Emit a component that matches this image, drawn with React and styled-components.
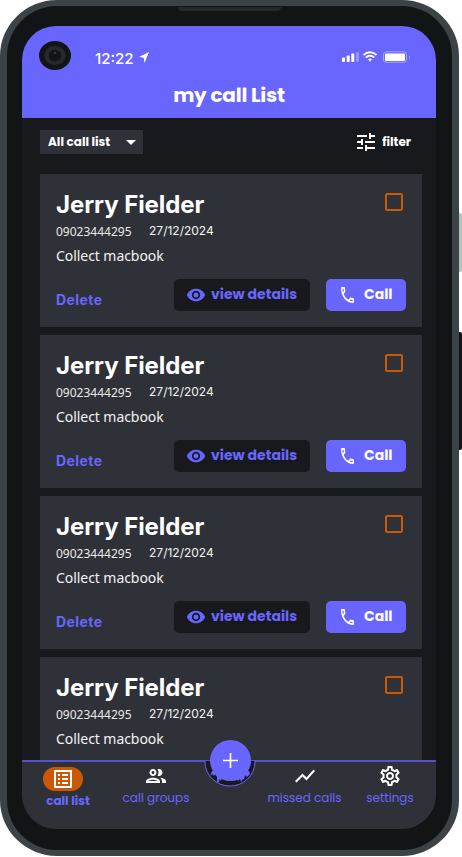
import React from 'react';
import styled, { createGlobalStyle } from 'styled-components';

const c = { violet: '#6966ff', panel: '#2f3139', ink: '#18191d', orange: '#cc5803' };
const round = "Poppins, Inter, 'Liberation Sans', sans-serif";
const inter = "Inter, 'Liberation Sans', sans-serif";
const noto = "'Noto Sans', sans-serif";

const Global = createGlobalStyle`
  * { box-sizing: border-box; }
  body { margin: 0; background: #fff; overflow: hidden; }
  button { border: 0; padding: 0; background: none; }
`;
const Stage = styled.div`position: relative; width: 462px; height: 857px; overflow: hidden;`;
const SideButton = styled.i`
  position: absolute; left: 450px; width: 12px; top: ${p => p.$top}px; height: ${p => p.$h}px;
  border-radius: 2px; background: ${p => p.$color};
`;
const Phone = styled.div`
  position: relative; width: 459px; height: 856px; padding: 20px 16px 21px 15px;
  border: solid #3c4347; border-width: 6px 7px; border-radius: 57px / 56px; background: #111516;
`;
const Speaker = styled.i`
  position: absolute; top: 1px; left: 170px; width: 105px; height: 4px; background: #25292c;
  clip-path: polygon(0 0, 100% 0, 97% 100%, 3% 100%);
`;
const Screen = styled.main`
  position: relative; display: flex; flex-direction: column; width: 414px; height: 803px;
  overflow: hidden; border-radius: 34px; background: ${c.ink};
`;
const Header = styled.header`height: 92px; flex: none; background: ${c.violet}; color: #fff;`;
const Status = styled.div`display: flex; align-items: center; height: 60px; padding: 4px 26px 0 17px;`;
const Camera = styled.svg`width: 32px; height: 29px; margin-top: -5px;`;
const Time = styled.time`
  margin: 1px 0 0 24px; width: 41px; font: 500 15px/20px ${inter}; letter-spacing: 0; white-space: nowrap;
`;
const Arrow = styled.svg`width: 10px; height: 11px; margin: 0 0 2px 3px;`;
const Signals = styled.svg`width: 69px; height: 12px; margin: -2px -1px 0 auto;`;
const Label = styled.span`
  font-family: ${round}; font-size: ${p => p.$size || 14}px; line-height: 20px;
  font-weight: ${p => p.$weight || 700};
  color: ${p => p.$color || '#fff'}; white-space: nowrap; margin-top: ${p => p.$lift ? -p.$lift : 0}px;
`;
const Heading = styled.h1`
  margin: -3px 0 0; text-align: center; font: 700 20px/24px ${round}; letter-spacing: -.23px;
`;
const Tools = styled.div`
  display: flex; justify-content: space-between; align-items: center; height: 24px; flex: none;
  margin: 12px 25px 20px 18px;
`;
const Select = styled.button`
  display: flex; align-items: center; justify-content: space-between; width: 103px; height: 24px;
  padding: 0 7px 0 8px; background: ${c.panel};
`;
const Filter = styled.button`display: flex; align-items: center; gap: 7px;`;
const List = styled.section`display: flex; flex-direction: column; gap: 8px; padding: 0 14px 0 18px;`;
const Card = styled.article`
  display: flex; flex-direction: column; flex: none; width: 382px; height: 153px;
  padding: 16px; background: ${c.panel}; color: #fff;
`;
const CardTop = styled.div`display: flex; justify-content: space-between; height: 32px;`;
const Name = styled.h2`margin: 0; font: 700 24px/30px ${inter}; letter-spacing: -.07px;`;
const Check = styled.i`width: 18px; height: 18px; margin: 3px 3px 0 0; border: 2px solid ${c.orange}; border-radius: 2px;`;
const Meta = styled.div`display: flex; gap: 17.5px; height: 20px; align-items: center;`;
const Num = styled.span`font: 400 12px/20px ${noto}; margin-top: -1px; color: #e9e9ea;`;
const DateText = styled.time`font: 400 12px/20px ${inter}; margin-top: -2px; color: #f3f3f3;`;
const Note = styled.p`margin: 4px 0 0; font: 400 14px/20px ${noto}; letter-spacing: -.06px; color: #f3f3f3;`;
const Actions = styled.div`display: flex; align-items: center; height: 32px; margin-top: 13px;`;
const Delete = styled.button`
  margin: 10px auto 0 0; color: ${c.violet}; font: 700 14px/20px ${inter}; letter-spacing: .42px;
`;
const Action = styled.button`
  display: flex; align-items: center; height: 32px; border-radius: 5px;
  width: ${p => (p.$primary ? 80 : 136)}px; margin-left: ${p => (p.$primary ? 16 : 0)}px;
  padding-left: ${p => (p.$primary ? 15 : 12)}px; gap: ${p => (p.$primary ? 10 : 5)}px;
  background: ${p => (p.$primary ? c.violet : c.ink)};
`;
const Nav = styled.nav`
  position: absolute; inset: auto 0 0; display: grid; grid-template-columns: 88px 91px 59px 88px 88px;
  height: 69px; border-top: 2px solid #5652cb; background: ${c.panel};
`;
const Item = styled.a`
  display: flex; flex-direction: column; align-items: center; padding-top: ${p => (p.$active ? 5 : 2)}px;
  padding-left: ${p => p.$left || 0}px; padding-right: ${p => p.$right || 0}px; margin: 0 -10px; white-space: nowrap;
`;
const Pill = styled.i`
  display: grid; place-items: center; width: 40px; height: 24px; border-radius: 12px;
  margin-left: -10px; background: ${c.orange};
`;
const Fab = styled.svg`position: absolute; left: 182px; top: 713px; width: 52px; height: 49px;`;

const Mi = ({ d, size = 24, color = '#fff' }) => (
  <svg width={size} height={size} viewBox="0 0 24 24" fill={color}><path d={d} /></svg>
);
const icons = {
  tune: 'M3 17v2h6v-2H3zM3 5v2h10V5H3zm10 16v-2h8v-2h-8v-2h-2v6h2zM7 9v2H3v2h4v2h2V9H7zm14 4v-2H11v2h10zm-6-4h2V7h4V5h-4V3h-2v6z',
  eye: 'M12 4.5C7 4.5 2.73 7.61 1 12c1.73 4.39 6 7.5 11 7.5s9.27-3.11 11-7.5c-1.73-4.39-6-7.5-11-7.5zM12 17c-2.76 0-5-2.24-5-5s2.24-5 5-5 5 2.24 5 5-2.24 5-5 5zm0-8c-1.66 0-3 1.34-3 3s1.34 3 3 3 3-1.34 3-3-1.34-3-3-3z',
  phone: 'M6.54 5c.06.89.21 1.76.45 2.59l-1.2 1.2c-.41-1.2-.67-2.47-.76-3.79h1.51m9.86 12.02c.85.24 1.72.39 2.6.45v1.49c-1.32-.09-2.59-.35-3.8-.75l1.2-1.19M7.5 3H4c-.55 0-1 .45-1 1 0 9.39 7.61 17 17 17 .55 0 1-.45 1-1v-3.49c0-.55-.45-1-1-1-1.24 0-2.45-.2-3.57-.57-.1-.04-.21-.05-.31-.05-.26 0-.51.1-.71.29l-2.2 2.2c-2.83-1.45-5.15-3.76-6.59-6.59l2.2-2.2c.28-.28.36-.67.25-1.02C8.7 6.45 8.5 5.25 8.5 4c0-.55-.45-1-1-1z',
  list: 'M11 7h6v2h-6V7zm0 4h6v2h-6v-2zm0 4h6v2h-6v-2zM7 7h2v2H7V7zm0 4h2v2H7v-2zm0 4h2v2H7v-2zM20.1 3H3.9c-.5 0-.9.4-.9.9v16.2c0 .4.4.9.9.9h16.2c.4 0 .9-.5.9-.9V3.9c0-.5-.5-.9-.9-.9zM19 19H5V5h14v14z',
  group: 'M9 13.75c-2.34 0-7 1.17-7 3.5V19h14v-1.75c0-2.33-4.66-3.5-7-3.5zM4.34 17c.84-.58 2.87-1.25 4.66-1.25s3.82.67 4.66 1.25H4.34zM9 12c1.93 0 3.5-1.57 3.5-3.5S10.930 5 9 5 5.500 6.570 5.500 8.500 7.070 12 9 12zm0-5c.83 0 1.500.67 1.500 1.500S9.830 10 9 10s-1.500-.67-1.500-1.500S8.170 7 9 7zm7.040 6.810c1.160.84 1.960 1.960 1.960 3.440V19h4v-1.750c0-2.020-3.500-3.170-5.960-3.440zM15 12c1.930 0 3.500-1.570 3.500-3.500S16.930 5 15 5c-.54 0-1.040.13-1.500.35.63.89 1 1.980 1 3.150s-.37 2.260-1 3.150c.46.22.96.35 1.500.35z',
  trend: 'M3.500 18.490l6-6.010 4 4L22 6.920l-1.410-1.410-7.090 7.970-4-4L2 16.990z',
  gear: 'M19.430 12.980c.04-.32.07-.64.07-.98s-.03-.66-.07-.98l2.110-1.650c.19-.15.24-.42.12-.64l-2-3.460c-.09-.16-.26-.25-.44-.25-.06 0-.12.010-.17.030l-2.490 1c-.52-.4-1.080-.73-1.690-.98l-.38-2.650C14.460 2.180 14.250 2 14 2h-4c-.25 0-.46.18-.49.42l-.38 2.650c-.61.25-1.170.59-1.690.98l-2.490-1c-.06-.02-.12-.03-.18-.03-.17 0-.34.09-.43.25l-2 3.460c-.13.22-.07.49.12.64l2.110 1.650c-.04.32-.07.65-.07.98s.03.66.07.98l-2.110 1.650c-.19.15-.24.42-.12.64l2 3.460c.09.16.26.25.44.25.06 0 .12-.01.17-.03l2.490-1c.52.4 1.080.73 1.690.98l.38 2.650c.03.24.24.42.49.42h4c.25 0 .46-.18.49-.42l.38-2.650c.61-.25 1.170-.59 1.690-.98l2.490 1c.06.02.12.03.18.03.17 0 .34-.09.43-.25l2-3.460c.12-.22.07-.49-.12-.64l-2.110-1.650zm-1.980-1.710c.04.31.05.52.05.73 0 .21-.02.43-.05.73l-.14 1.130.89.7 1.080.84-.7 1.210-1.270-.51-1.040-.42-.9.68c-.43.32-.84.56-1.250.73l-1.060.43-.16 1.130-.2 1.350h-1.400l-.19-1.350-.16-1.130-1.060-.43c-.43-.18-.83-.41-1.230-.71l-.91-.7-1.060.43-1.270.51-.7-1.210 1.080-.84.89-.7-.14-1.130c-.03-.31-.05-.54-.05-.74s.02-.43.05-.73l.14-1.130-.89-.7-1.080-.84.7-1.210 1.270.51 1.040.42.9-.68c.43-.32.84-.56 1.250-.73l1.060-.43.16-1.130.2-1.350h1.390l.19 1.350.16 1.130 1.060.43c.43.18.83.41 1.230.71l.91.7 1.060-.43 1.270-.51.7 1.210-1.070.85-.89.7.14 1.130zM12 8c-2.210 0-4 1.790-4 4s1.790 4 4 4 4-1.790 4-4-1.790-4-4-4zm0 6c-1.100 0-2-.9-2-2s.9-2 2-2 2 .9 2 2-.9 2-2 2z',
};

const contacts = Array.from({ length: 4 }, (_, id) => ({
  id, name: 'Jerry Fielder', number: '09023444295', date: '27/12/2024', note: 'Collect macbook',
}));

function CallCard({ call }) {
  return (
    <Card>
      <CardTop><Name>{call.name}</Name><Check /></CardTop>
      <Meta><Num>{call.number}</Num><DateText>{call.date}</DateText></Meta>
      <Note>{call.note}</Note>
      <Actions>
        <Delete>Delete</Delete>
        <Action><Mi d={icons.eye} size={20} color={c.violet} /><Label $lift={2} $color={c.violet}>view details</Label></Action>
        <Action $primary>
          <svg width="13" height="16" viewBox="3 3 18 18" preserveAspectRatio="none"><path d={icons.phone} fill="#fff" /></svg>
          <Label $lift={2}>Call</Label>
        </Action>
      </Actions>
    </Card>
  );
}

export default function App() {
  return (
    <Stage>
      <Global />
      <SideButton $top={213} $h={59} $color="#afc5b7" />
      <SideButton $top={332} $h={118} $color="#111516" />
      <Phone>
        <Speaker />
        <Screen>
          <Header>
            <Status>
              <Camera viewBox="0 0 32 29">
                <ellipse cx="16" cy="14.500" rx="16" ry="14.500" fill="#111516" />
                <ellipse cx="16" cy="14.500" rx="10.700" ry="9.700" fill="#25292c" />
                <ellipse cx="16" cy="14.500" rx="6.300" ry="5.700" fill="#111516" />
                <ellipse cx="16" cy="12" rx="1.300" ry="1" fill="#3c4347" />
              </Camera>
              <Time>12:22</Time>
              <Arrow viewBox="0 0 10 11"><path d="M10 0L5.500 11 4.700 5.700 0 5z" fill="#fff" /></Arrow>
              <Signals viewBox="0 0 69 12">
                <g fill="#fff">
                  <rect x="0" y="6.500" width="3" height="4.500" rx=".7" />
                  <rect x="4.700" y="4.500" width="3" height="6.500" rx=".7" />
                  <rect x="9.300" y="2.500" width="3" height="8.500" rx=".7" />
                  <rect x="14" y="1" width="3" height="10" rx=".7" opacity=".3" />
                  <rect x="43" y="2.500" width="20" height="7.500" rx="1" />
                  <path d="M67 4.500q2 1.500 0 3.500z" opacity=".4" />
                  <path d="M26 8.300q2-1.500 4 0l-2 2.400z" />
                </g>
                <rect x="41.500" y=".8" width="23" height="10.500" rx="2.500" fill="none" stroke="#fff" opacity=".4" />
                <path d="M21.500 4q6.500-5.500 13 0M23.800 6.500q4.200-3.400 8.400 0" fill="none" stroke="#fff" strokeWidth="1.900" />
              </Signals>
            </Status>
            <Heading>my call List</Heading>
          </Header>
          <Tools>
            <Select><Label $size={12}>All call list</Label><svg width="10" height="5" viewBox="0 0 10 5"><path d="M0 0h10L5 5z" fill="#fff" /></svg></Select>
            <Filter><svg width="18" height="18" viewBox="3 3 18 18"><path d={icons.tune} fill="#fff" /></svg><Label $size={12}>filter</Label></Filter>
          </Tools>
          <List>{contacts.map(call => <CallCard key={call.id} call={call} />)}</List>
          <Nav>
            <Item $active $left={4}><Pill><Mi d={icons.list} /></Pill><Label $size={12} $color={c.violet}>call list</Label></Item>
            <Item $left={1}><Mi d={icons.group} /><Label $size={12} $weight={400} $color={c.violet}>call groups</Label></Item>
            <i />
            <Item $left={1}><Mi d={icons.trend} /><Label $size={12} $weight={400} $color={c.violet}>missed calls</Label></Item>
            <Item $right={4}><Mi d={icons.gear} /><Label $size={12} $weight={400} $color={c.violet}>settings</Label></Item>
          </Nav>
          <Fab viewBox="0 0 52 49">
            <path d="M1 22v1a25 24 0 0 0 50 0V22z" fill={c.ink} />
            <path d="M6 37l2-2 2 2 1-2 2 3v5l2 0 0-3 2 2 1-3h15l1 3 2-2 1 3 2-3 1 1 1-5 2 2 3-3-1-3H8z" fill={c.violet} />
            <path d="M1 22v1a25 24 0 0 0 50 0V22" fill="none" stroke={c.violet} />
            <circle cx="26.500" cy="21.500" r="20.500" fill={c.violet} />
            <path d="M26.500 14v15M19 21.500h15" stroke="#fff" strokeWidth="1.600" />
          </Fab>
        </Screen>
      </Phone>
    </Stage>
  );
}
